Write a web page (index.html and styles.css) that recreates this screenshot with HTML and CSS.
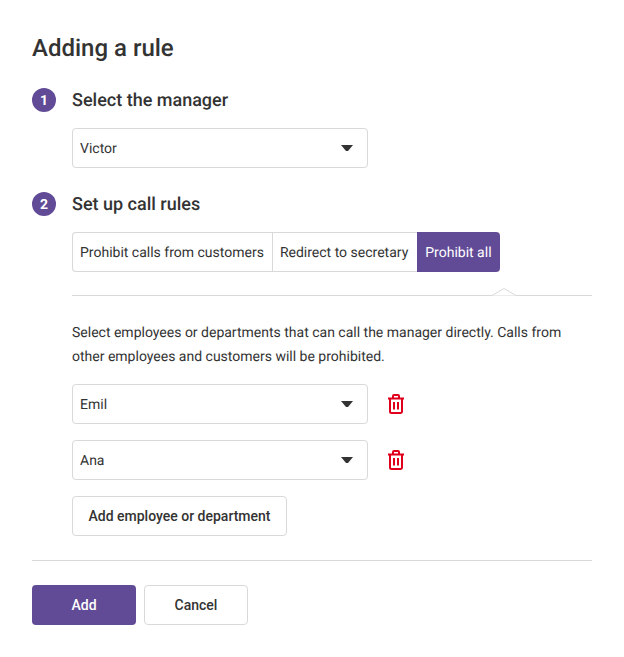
FILE: index.html
```html
<!DOCTYPE html>
<html lang="en">
	<head>
		<meta charset="UTF-8" />
		<title>Adding a rule</title>
		<link rel="stylesheet" href="styles.css">
	</head>
	<body>
		<form class="rule-form">
			<h1>Adding a rule</h1>

			<div class="step-head">
				<span class="step-num">1</span>
				<h2>Select the manager</h2>
			</div>
			<div class="step-body">
				<div class="select">Victor<span class="caret"></span></div>
			</div>

			<div class="step-head">
				<span class="step-num">2</span>
				<h2>Set up call rules</h2>
			</div>
			<div class="step-body">
				<div class="tabs">
					<div class="tab">Prohibit calls from customers</div>
					<div class="tab">Redirect to secretary</div>
					<div class="tab active">Prohibit all</div>
				</div>
				<div class="tab-line">
					<svg class="notch" width="24" height="8" viewBox="0 0 24 8">
						<path d="M0 7.500L12 .5L24 7.500" fill="white" stroke="#d9d9d9"/>
					</svg>
				</div>
				<p class="hint">Select employees or departments that can call the manager directly. Calls from other employees and customers will be prohibited.</p>

				<div class="employee">
					<div class="select">Emil<span class="caret"></span></div>
					<svg class="trash" width="16" height="20" viewBox="0 0 16 20" fill="none" stroke="#e0001b" stroke-width="2">
						<path d="M0 4.500h16M5 4.500V2a1 1 0 0 1 1-1h4a1 1 0 0 1 1 1v2.500M2 4.500V17.500a1.500 1.500 0 0 0 1.500 1.500h9a1.500 1.500 0 0 0 1.500-1.500V4.500M6 8v7.500M10 8v7.500"/>
					</svg>
				</div>
				<div class="employee">
					<div class="select">Ana<span class="caret"></span></div>
					<svg class="trash" width="16" height="20" viewBox="0 0 16 20" fill="none" stroke="#e0001b" stroke-width="2">
						<path d="M0 4.500h16M5 4.500V2a1 1 0 0 1 1-1h4a1 1 0 0 1 1 1v2.500M2 4.500V17.500a1.500 1.500 0 0 0 1.500 1.500h9a1.500 1.500 0 0 0 1.500-1.500V4.500M6 8v7.500M10 8v7.500"/>
					</svg>
				</div>
				<button type="button" class="btn btn-wide">Add employee or department</button>
			</div>

			<div class="actions">
				<button type="button" class="btn btn-primary">Add</button>
				<button type="button" class="btn btn-cancel">Cancel</button>
			</div>
		</form>
	</body>
</html>
```

FILE: styles.css
```css
body {
	margin: 0;
	background: white;
	font-family: Roboto, "Liberation Sans", sans-serif;
	color: #333;
	text-rendering: geometricPrecision;
}
.rule-form {
	width: 560px;
	padding: 32px 32px 0;
}
h1 {
	margin: 0;
	font-size: 24px;
	line-height: 32px;
	font-weight: 500;
}
h2 {
	margin: 1px 0 -1px;
	font-size: 18px;
	line-height: 24px;
	font-weight: 500;
}
.step-head {
	display: flex;
	align-items: center;
	gap: 16px;
	margin-top: 24px;
}
.step-num {
	width: 24px;
	height: 24px;
	border-radius: 50%;
	background: #614b97;
	color: white;
	font-size: 14px;
	font-weight: 700;
	line-height: 26px;
	text-align: center;
}
.step-body {
	margin-top: 16px;
	padding-left: 40px;
}
.select {
	box-sizing: border-box;
	display: flex;
	align-items: center;
	justify-content: space-between;
	width: 296px;
	height: 40px;
	padding: 2px 14px 0 7px;
	border: 1px solid #d9d9d9;
	border-radius: 4px;
	font-size: 14px;
}
.caret {
	width: 2px;
	height: 0;
	margin-top: -2px;
	border-left: 5px solid transparent;
	border-right: 5px solid transparent;
	border-top: 6px solid #333;
}
.tabs {
	display: flex;
	width: max-content;
	height: 40px;
}
.tab {
	display: flex;
	align-items: center;
	padding: 2px 8px 0 7px;
	border: 1px solid #d9d9d9;
	border-right: none;
	font-size: 14px;
}
.tab + .tab {
	padding-right: 9px;
}
.tab:first-child {
	border-radius: 4px 0 0 4px;
}
.tab.active {
	padding: 2px 8px 0;
	border: none;
	border-radius: 0 4px 4px 0;
	background: #614b97;
	color: #fff;
}
.tab-line {
	position: relative;
	margin-top: 23px;
	border-top: 1px solid #d9d9d9;
}
.notch {
	position: absolute;
	top: -8px;
	left: 420px;
}
.hint {
	margin: 25px 0 15px;
	font-size: 14px;
	line-height: 24px;
}
.employee {
	display: flex;
	align-items: center;
	gap: 20px;
	margin-bottom: 16px;
}
.btn {
	box-sizing: border-box;
	height: 40px;
	border: 1px solid #d9d9d9;
	border-radius: 4px;
	background: white;
	color: #333;
	font-family: inherit;
	font-size: 14px;
	font-weight: 500;
	cursor: pointer;
}
.btn-wide {
	width: 215px;
}
.actions {
	display: flex;
	gap: 8px;
	margin-top: 24px;
	padding-top: 24px;
	border-top: 1px solid #d9d9d9;
}
.btn-primary {
	width: 104px;
	border: none;
	background: #614b97;
	color: white;
}
.btn-cancel {
	width: 104px;
}
```
